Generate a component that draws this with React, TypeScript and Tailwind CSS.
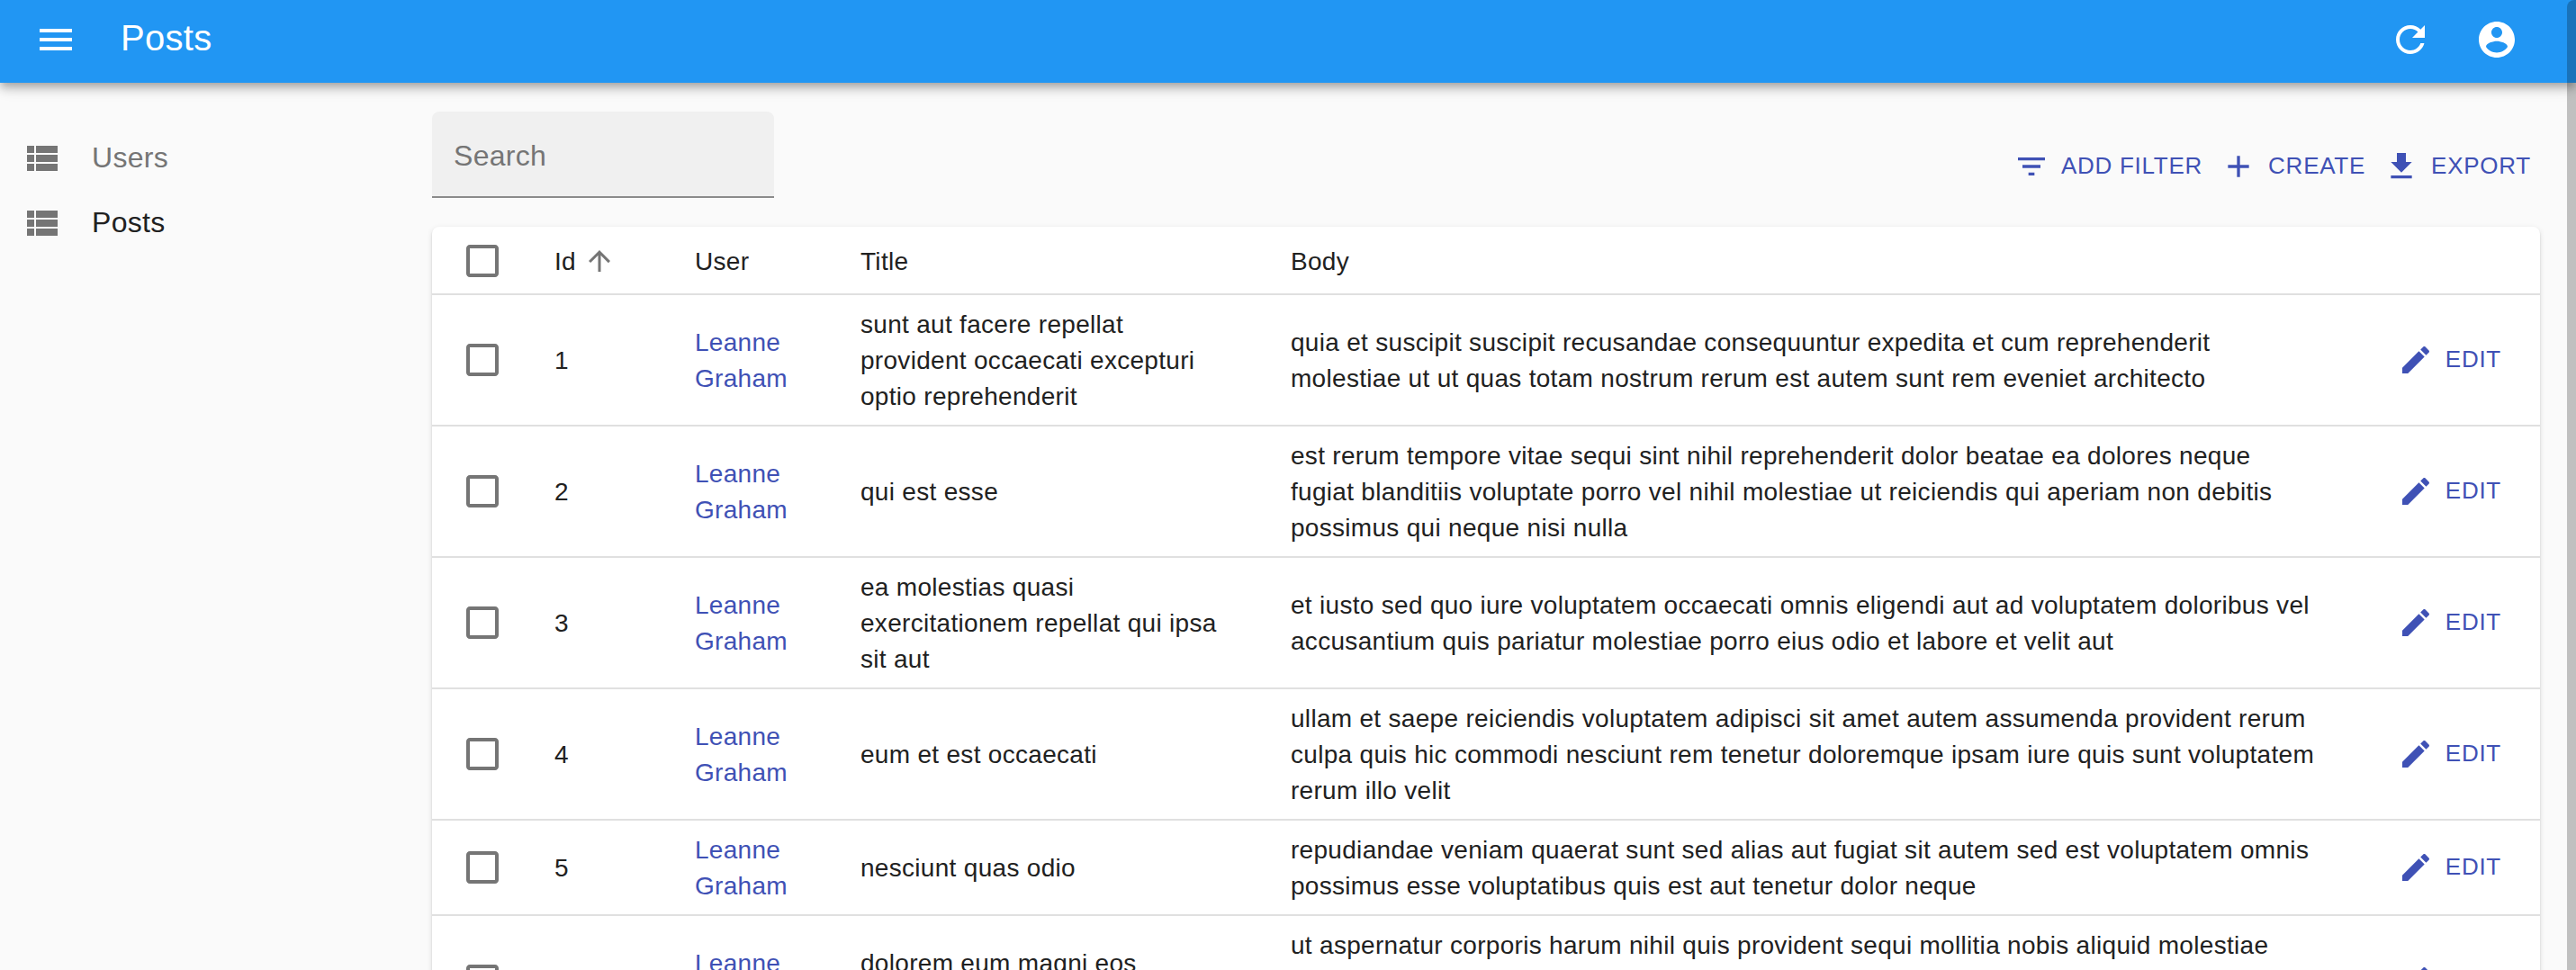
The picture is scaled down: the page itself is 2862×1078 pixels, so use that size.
import React from "react";

const icons = {
  menu: "M3 18h18v-2H3v2zm0-5h18v-2H3v2zm0-7v2h18V6H3z",
  refresh:
    "M17.65 6.35C16.2 4.9 14.21 4 12 4c-4.42 0-7.99 3.58-7.99 8s3.57 8 7.99 8c3.73 0 6.84-2.55 7.73-6h-2.08c-.82 2.33-3.04 4-5.65 4-3.31 0-6-2.69-6-6s2.69-6 6-6c1.66 0 3.14.69 4.22 1.78L13 11h7V4l-2.35 2.35z",
  account:
    "M12 2C6.48 2 2 6.48 2 12s4.48 10 10 10 10-4.48 10-10S17.52 2 12 2zm0 3c1.66 0 3 1.34 3 3s-1.34 3-3 3-3-1.34-3-3 1.34-3 3-3zm0 14.2c-2.5 0-4.71-1.28-6-3.22.03-1.99 4-3.08 6-3.08 1.99 0 5.97 1.09 6 3.08-1.29 1.94-3.5 3.22-6 3.22z",
  list: "M4 14h4v-4H4v4zm0 5h4v-4H4v4zM4 9h4V5H4v4zm5 5h12v-4H9v4zm0 5h12v-4H9v4zM9 5v4h12V5H9z",
  filter: "M10 18h4v-2h-4v2zM3 6v2h18V6H3zm3 7h12v-2H6v2z",
  add: "M19 13h-6v6h-2v-6H5v-2h6V5h2v6h6v2z",
  download: "M19 9h-4V3H9v6H5l7 7 7-7zM5 18v2h14v-2H5z",
  edit: "M3 17.25V21h3.75L17.81 9.94l-3.75-3.75L3 17.25zM20.71 7.04c.39-.39.39-1.02 0-1.41l-2.34-2.34c-.39-.39-1.02-.39-1.41 0l-1.83 1.83 3.75 3.75 1.83-1.83z",
  arrowUp: "M4 12l1.41 1.41L11 7.83V20h2V7.83l5.58 5.59L20 12l-8-8-8 8z",
  checkbox:
    "M19 5v14H5V5h14m0-2H5c-1.1 0-2 .9-2 2v14c0 1.1.9 2 2 2h14c1.1 0 2-.9 2-2V5c0-1.1-.9-2-2-2z",
};

function Icon({ name, className }: { name: keyof typeof icons; className: string }) {
  return (
    <svg viewBox="0 0 24 24" fill="currentColor" aria-hidden="true" className={`shrink-0 ${className}`}>
      <path d={icons[name]} />
    </svg>
  );
}

function ActionButton({ icon, label }: { icon: keyof typeof icons; label: string }) {
  return (
    <button className="flex items-center px-2.5 text-[26px] leading-[46px] tracking-[0.02857em] whitespace-nowrap text-[#3f51b5] uppercase">
      <Icon name={icon} className="size-10" />
      <span className="-mt-0.5 pl-[13px]">{label}</span>
    </button>
  );
}

const posts = [
  {
    id: 1,
    title: ["sunt aut facere repellat", "provident occaecati excepturi", "optio reprehenderit"],
    body: [
      "quia et suscipit suscipit recusandae consequuntur expedita et cum reprehenderit",
      "molestiae ut ut quas totam nostrum rerum est autem sunt rem eveniet architecto",
    ],
  },
  {
    id: 2,
    title: ["qui est esse"],
    body: [
      "est rerum tempore vitae sequi sint nihil reprehenderit dolor beatae ea dolores neque",
      "fugiat blanditiis voluptate porro vel nihil molestiae ut reiciendis qui aperiam non debitis",
      "possimus qui neque nisi nulla",
    ],
  },
  {
    id: 3,
    title: ["ea molestias quasi", "exercitationem repellat qui ipsa", "sit aut"],
    body: [
      "et iusto sed quo iure voluptatem occaecati omnis eligendi aut ad voluptatem doloribus vel",
      "accusantium quis pariatur molestiae porro eius odio et labore et velit aut",
    ],
  },
  {
    id: 4,
    title: ["eum et est occaecati"],
    body: [
      "ullam et saepe reiciendis voluptatem adipisci sit amet autem assumenda provident rerum",
      "culpa quis hic commodi nesciunt rem tenetur doloremque ipsam iure quis sunt voluptatem",
      "rerum illo velit",
    ],
  },
  {
    id: 5,
    title: ["nesciunt quas odio"],
    body: [
      "repudiandae veniam quaerat sunt sed alias aut fugiat sit autem sed est voluptatem omnis",
      "possimus esse voluptatibus quis est aut tenetur dolor neque",
    ],
  },
  {
    id: 6,
    title: ["dolorem eum magni eos", "aperiam quia"],
    body: [
      "ut aspernatur corporis harum nihil quis provident sequi mollitia nobis aliquid molestiae",
      "perspiciatis et ea nemo ab reprehenderit accusantium quas voluptate dolores velit et",
      "doloremque molestiae",
    ],
  },
];

function Lines({ lines, className = "" }: { lines: string[]; className?: string }) {
  return (
    <div className={`pt-0.5 whitespace-nowrap ${className}`}>
      {lines.map((line) => (
        <div key={line}>{line}</div>
      ))}
    </div>
  );
}

const rowClass =
  "grid grid-cols-[136px_156px_184px_478px_1fr_auto] items-center border-b-2 border-[#e0e0e0] pr-[33px]";

export default function App() {
  return (
    <div className="relative flex h-[1078px] w-[2862px] flex-col overflow-hidden bg-[#fafafa] font-['Liberation_Sans',Arial,sans-serif] text-[28px] leading-10 tracking-[0.01071em] text-[#212121]">
      <header className="z-10 flex h-[92px] shrink-0 items-center bg-[#2196f3] pr-16 pb-1 pl-[38px] text-white shadow-[0_4px_8px_-2px_rgba(0,0,0,0.2),0_8px_10px_0_rgba(0,0,0,0.14),0_2px_20px_0_rgba(0,0,0,0.12)]">
        <Icon name="menu" className="size-12" />
        <h1 className="-mt-1 flex-1 pl-12 text-[40px] leading-[64px] tracking-[0.0075em]">Posts</h1>
        <div className="flex gap-12">
          <Icon name="refresh" className="size-12" />
          <Icon name="account" className="size-12" />
        </div>
      </header>

      <div className="flex min-h-0 flex-1">
        <nav className="w-[480px] shrink-0 pt-12 pl-[22px] text-[32px] leading-[48px] tracking-[0.00938em]">
          <a className="flex h-[72px] items-center gap-8 text-[#757575]">
            <Icon name="list" className="size-12" />
            <span className="-mt-0.5">Users</span>
          </a>
          <a className="flex h-[72px] items-center gap-8">
            <Icon name="list" className="size-12 text-[#757575]" />
            <span className="-mt-0.5">Posts</span>
          </a>
        </nav>

        <main className="flex w-[2342px] flex-col pt-8">
          <div className="flex h-32 shrink-0 items-start justify-between">
            <div className="flex h-24 w-[380px] items-center rounded-t-lg border-b-2 border-[#8b8b8b] bg-[#f0f0f0] px-6 pt-1 text-[32px] tracking-[0.00938em] text-[#757575]">
              <span>Search</span>
            </div>
            <div className="flex pt-[39px]">
              <ActionButton icon="filter" label="Add filter" />
              <ActionButton icon="add" label="Create" />
              <ActionButton icon="download" label="Export" />
            </div>
          </div>

          <section className="shrink-0 rounded-t-lg bg-white shadow-[0_4px_2px_-2px_rgba(0,0,0,0.2),0_2px_2px_0_rgba(0,0,0,0.14),0_2px_6px_0_rgba(0,0,0,0.12)]">
            <div className={`${rowClass} h-[76px] pt-0.5`}>
              <Icon name="checkbox" className="ml-8 size-12 text-[#757575]" />
              <div className="flex items-center">
                <span className="pt-0.5">Id</span>
                <Icon name="arrowUp" className="ml-2 size-9 text-[#757575]" />
              </div>
              <div className="pt-0.5">User</div>
              <div className="pt-0.5">Title</div>
              <div className="pt-0.5">Body</div>
            </div>
            {posts.map((post) => (
              <div key={post.id} className={`${rowClass} py-[11px]`}>
                <Icon name="checkbox" className="ml-8 size-12 text-[#757575]" />
                <div className="pt-0.5">{post.id}</div>
                <Lines lines={["Leanne", "Graham"]} className="text-[#3f51b5]" />
                <Lines lines={post.title} />
                <Lines lines={post.body} />
                <ActionButton icon="edit" label="Edit" />
              </div>
            ))}
          </section>
        </main>
      </div>

      <div className="absolute top-0 right-0 z-20 h-full w-2.5 rounded-tl-lg bg-black/[0.23]" />
    </div>
  );
}
